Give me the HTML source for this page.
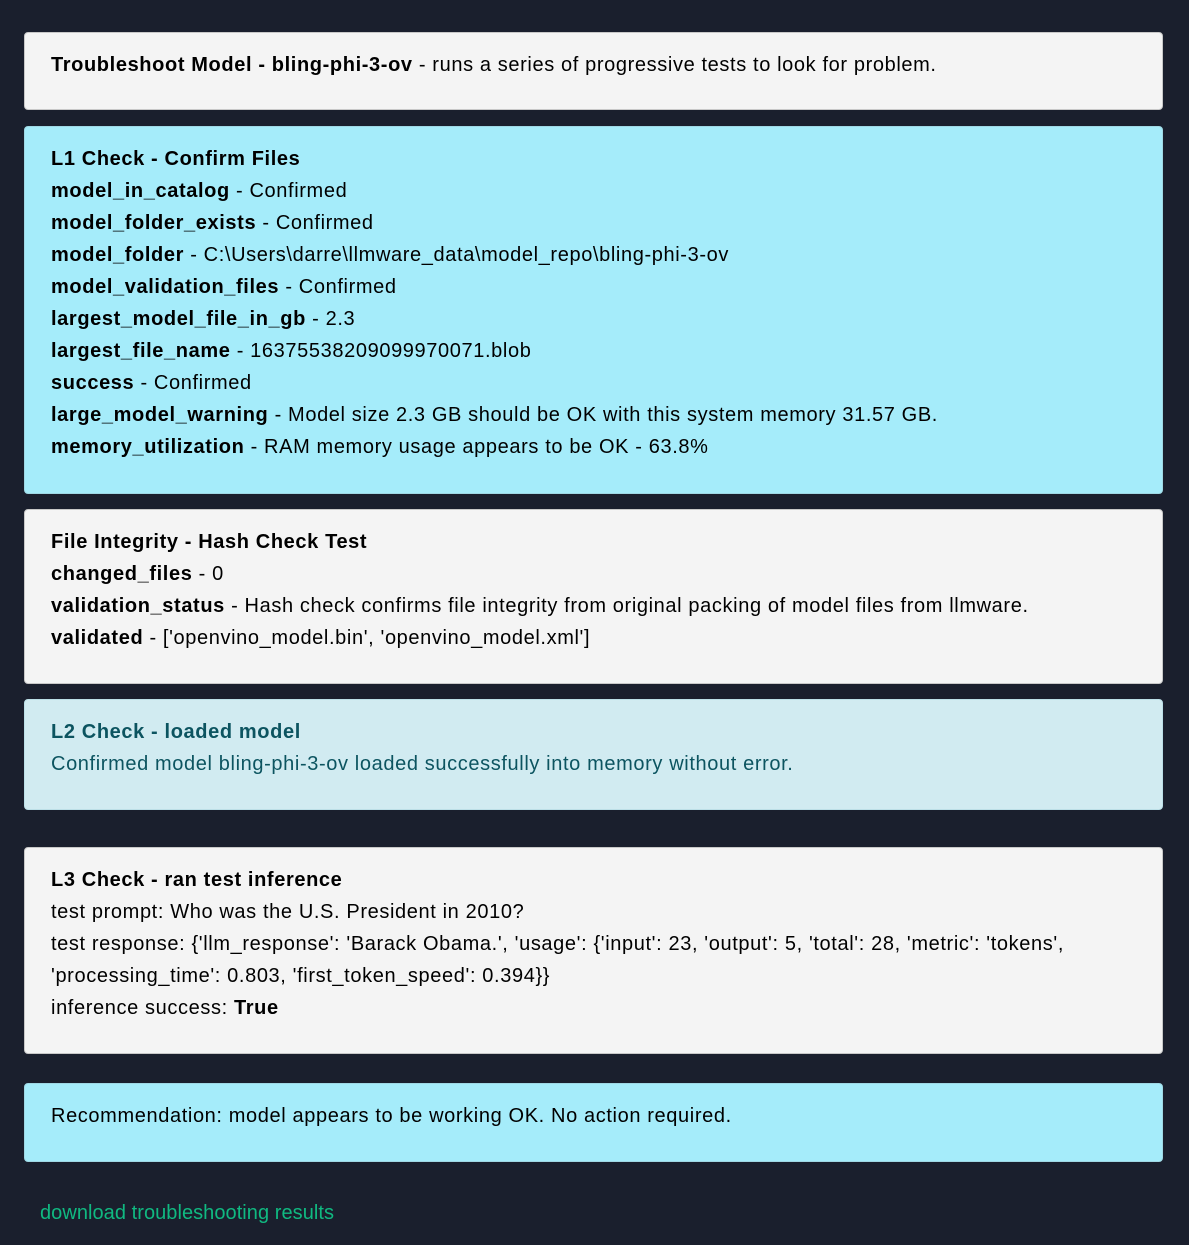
<!DOCTYPE html>
<html><head><meta charset="utf-8"><style>
body{margin:0;background:#1a1f2d;width:1189px;height:1245px;font-family:"Liberation Sans",Arial,sans-serif;font-size:20px;line-height:32px;letter-spacing:0.62px;color:#000;position:relative;overflow:hidden}
.b{position:absolute;box-sizing:border-box;left:24px;width:1139px;padding:16px 26px 0;border:1px solid #c8c8c8;border-radius:4px;background:#f4f4f4}
.c{background:#a5ecfa;border-color:#9fd8e4}
.l2{background:#d1ebf1;border-color:#bcdfe7;color:#0c5460}
b{font-weight:bold}
a{position:absolute;left:40px;top:1197px;color:#10b981;text-decoration:none;letter-spacing:0.05px}
</style></head><body>
<div class="b" style="top:32px;height:78px"><b>Troubleshoot Model - bling-phi-3-ov</b> - runs a series of progressive tests to look for problem.</div>
<div class="b c" style="top:126px;height:368px">
<b>L1 Check - Confirm Files</b><br>
<b>model_in_catalog</b> - Confirmed<br>
<b>model_folder_exists</b> - Confirmed<br>
<b>model_folder</b> - C:\Users\darre\llmware_data\model_repo\bling-phi-3-ov<br>
<b>model_validation_files</b> - Confirmed<br>
<b>largest_model_file_in_gb</b> - 2.3<br>
<b>largest_file_name</b> - 16375538209099970071.blob<br>
<b>success</b> - Confirmed<br>
<b>large_model_warning</b> - Model size 2.3 GB should be OK with this system memory 31.57 GB.<br>
<b>memory_utilization</b> - RAM memory usage appears to be OK - 63.8%
</div>
<div class="b" style="top:509px;height:175px">
<b>File Integrity - Hash Check Test</b><br>
<b>changed_files</b> - 0<br>
<b>validation_status</b> - Hash check confirms file integrity from original packing of model files from llmware.<br>
<b>validated</b> - ['openvino_model.bin', 'openvino_model.xml']
</div>
<div class="b l2" style="top:699px;height:111px">
<b>L2 Check - loaded model</b><br>
Confirmed model bling-phi-3-ov loaded successfully into memory without error.
</div>
<div class="b" style="top:847px;height:207px">
<b>L3 Check - ran test inference</b><br>
test prompt: Who was the U.S. President in 2010?<br>
test response: {'llm_response': 'Barack Obama.', 'usage': {'input': 23, 'output': 5, 'total': 28, 'metric': 'tokens', 'processing_time': 0.803, 'first_token_speed': 0.394}}<br>
inference success: <b>True</b>
</div>
<div class="b c" style="top:1083px;height:79px">Recommendation: model appears to be working OK. No action required.</div>
<a>download troubleshooting results</a>
</body></html>
